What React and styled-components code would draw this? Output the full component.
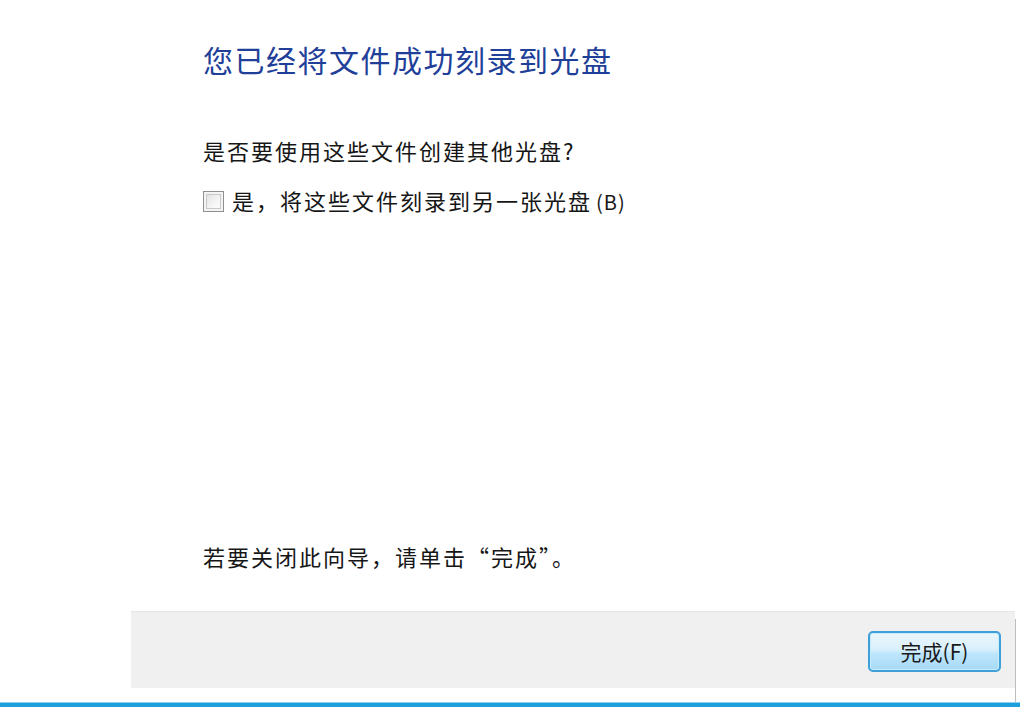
import React from 'react';
import styled, { createGlobalStyle } from 'styled-components';

const GlobalStyle = createGlobalStyle`
  html, body {
    margin: 0;
    padding: 0;
    background: #ffffff;
  }
  body {
    font-family: "Noto Sans CJK SC", "Noto Sans", sans-serif;
    overflow: hidden;
  }
`;

const Page = styled.div`
  width: 1020px;
  height: 707px;
  display: flex;
  flex-direction: column;
  background: #ffffff;
`;

const Body = styled.div`
  flex: 1;
  display: flex;
  flex-direction: column;
  padding: 39px 0 0 203px;
`;

const Title = styled.h1`
  margin: 0;
  font-size: 30px;
  line-height: 40px;
  font-weight: 400;
  color: #1f3f99;
  letter-spacing: 1.5px;
`;

const Question = styled.p`
  margin: 54px 0 0;
  font-size: 22px;
  line-height: 34px;
  color: #161616;
  letter-spacing: 2px;
`;

const CheckRow = styled.label`
  display: flex;
  align-items: center;
  gap: 8px;
  margin-top: 16px;
  font-size: 22px;
  line-height: 34px;
  color: #161616;
  letter-spacing: 2px;
`;

const Box = styled.span`
  width: 19px;
  height: 19px;
  border: 1px solid #8f8f8f;
  box-shadow: inset 0 0 0 2px #f4f4f4, inset 0 0 0 3px #c8c8c8;
  background: linear-gradient(135deg, #dcdcdc 0%, #f6f6f6 60%, #ffffff 100%);
  flex: none;
`;

const Hint = styled.span`
  font-size: 20px;
  margin-left: 4px;
  letter-spacing: 1px;
`;

const Closing = styled.p`
  margin: auto 0 38px;
  font-size: 22px;
  line-height: 34px;
  color: #161616;
  letter-spacing: 2px;
`;

const FooterRow = styled.div`
  display: flex;
  height: 77px;
`;

const Spacer = styled.div`
  width: 131px;
`;

const Footer = styled.div`
  width: 884px;
  display: flex;
  align-items: center;
  justify-content: flex-end;
  padding-right: 14px;
  box-sizing: border-box;
  background: #f0f0f0;
  border-top: 1px solid #e6e6e6;
`;

const Edge = styled.div`
  flex: 1;
  margin-top: 8px;
  border-left: 1px solid #bdbdbd;
  height: 88px;
  border-bottom-left-radius: 4px;
`;

const FinishButton = styled.button`
  width: 133px;
  height: 41px;
  margin-top: 2px;
  border: 2px solid #3f9fd8;
  border-radius: 5px;
  background: linear-gradient(to bottom, #eaf6fd 0%, #d9f0fc 45%, #bee6fd 55%, #a7d9f5 100%);
  box-shadow: inset 0 0 0 1px #c7ecfc;
  font-family: "Noto Sans CJK SC", "Noto Sans", sans-serif;
  font-size: 21px;
  color: #1a1a1a;
  padding: 0;
`;

const Gap = styled.div`
  height: 14px;
`;

const BlueBar = styled.div`
  height: 4px;
  background: #1c9fdb;
  border-top: 1px solid #8cd0ef;
`;

export default function App() {
  return (
    <Page>
      <GlobalStyle />
      <Body>
        <Title>您已经将文件成功刻录到光盘</Title>
        <Question>是否要使用这些文件创建其他光盘?</Question>
        <CheckRow>
          <Box />
          <span>
            是，将这些文件刻录到另一张光盘<Hint>(B)</Hint>
          </span>
        </CheckRow>
        <Closing>若要关闭此向导，请单击“完成”。</Closing>
      </Body>
      <FooterRow>
        <Spacer />
        <Footer>
          <FinishButton>完成(F)</FinishButton>
        </Footer>
        <Edge />
      </FooterRow>
      <Gap />
      <BlueBar />
    </Page>
  );
}
